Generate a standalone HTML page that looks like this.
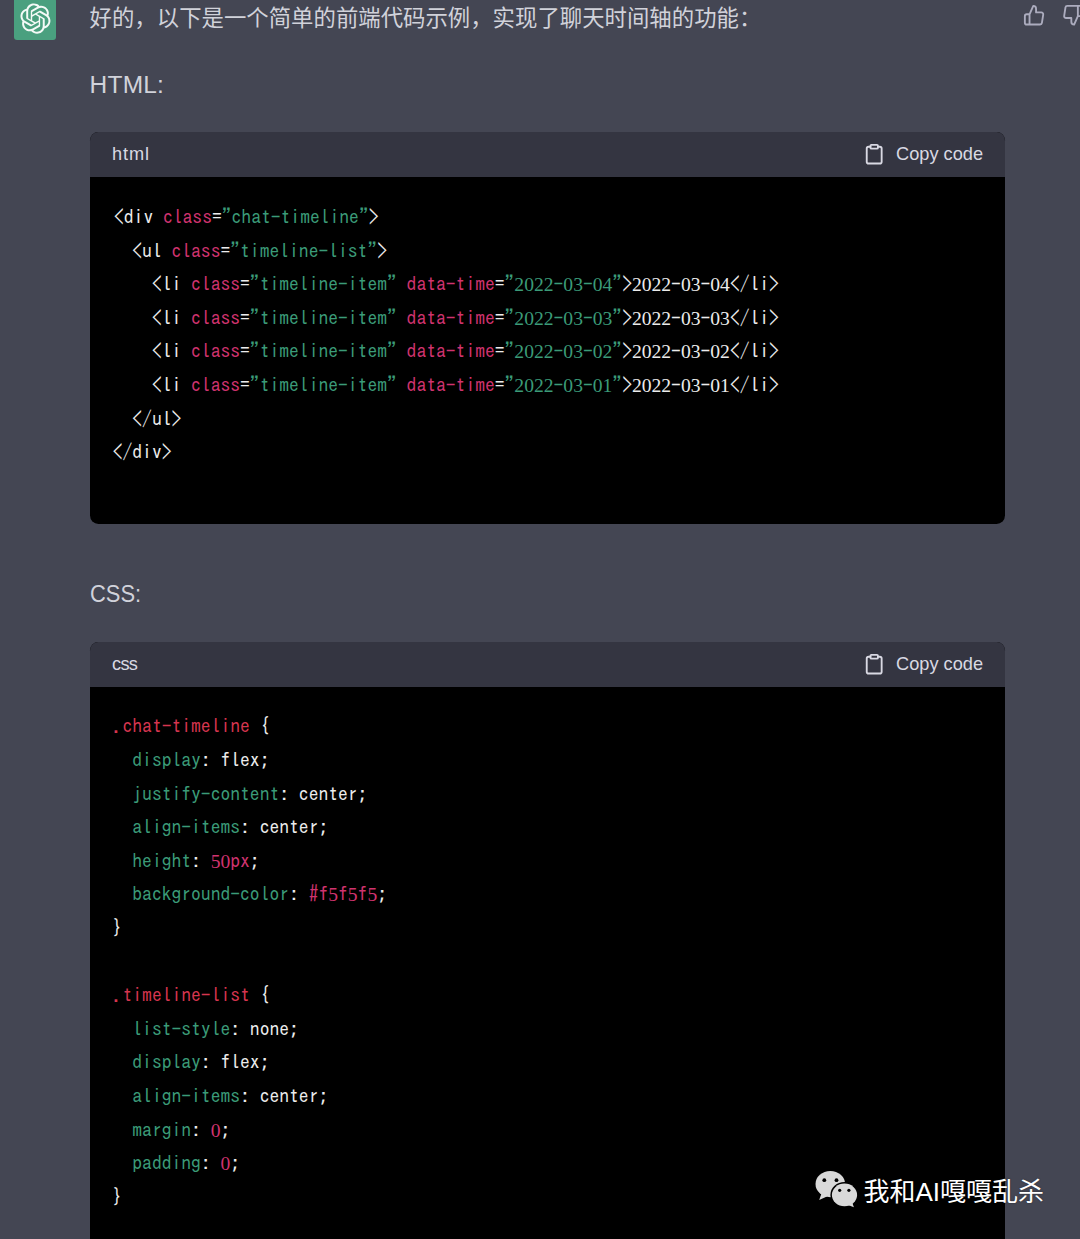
<!DOCTYPE html>
<html lang="zh-CN">
<head>
<meta charset="utf-8">
<title>ChatGPT</title>
<style>
*{box-sizing:border-box}
html,body{margin:0;padding:0;overflow:hidden}
body{width:1080px;height:1239px;overflow:hidden;background:#444653;position:relative;
 font-family:"Liberation Sans","Noto Sans CJK SC",sans-serif;color:#d1d2da}
.avatar{position:absolute;left:14px;top:-2px;width:42px;height:42px;background:#4aa07f;border-radius:3px;color:#f4faf7}
.avatar svg{position:absolute;left:5.75px;top:5.1px;width:31.1px;height:31.1px}
.content{position:absolute;left:89.6px;top:-2.1px;width:915.8px}
p{margin:0 0 28px 0;font-size:22.4px;line-height:39.2px;height:39.2px;white-space:nowrap;padding-top:1.5px}
.en{font-size:24.5px;line-height:1;position:relative;top:-.8px}
.cb{background:#000;border-radius:8.4px;overflow:hidden}
.hd{height:44.8px;background:#343541;display:flex;align-items:center;justify-content:space-between;padding:0 22.4px;
 font-size:18.2px;color:#d9d9e3}
.lb{letter-spacing:.9px}
.copy{display:flex;align-items:center;gap:11px}
.copy svg{width:22.4px;height:22.4px}
pre{margin:0;padding:22.9px 22.4px 21.9px 23.1px;font-family:"IPAGothic","Liberation Mono",monospace;font-size:19.6px;line-height:33.6px;color:#ececec}
pre i{font-style:normal;font-family:"Liberation Serif",serif;line-height:0}
.a{color:#d0336f}.s{color:#3b9b78}.c{color:#d6354f}
.thumb{position:absolute;top:3.5px;width:22.4px;height:22.4px;color:#acacbe}
.wm{position:absolute;left:863.4px;top:1171.8px;font-size:26px;line-height:40px;color:#fff;white-space:nowrap;text-shadow:0 0 2px rgba(0,0,0,.4)}
</style>
</head>
<body>
<div class="avatar"><svg viewBox="0 0 41 41" fill="none"><path d="M37.5324 16.8707C37.9808 15.5241 38.1363 14.0974 37.9886 12.6859C37.8409 11.2744 37.3934 9.91076 36.676 8.68622C35.6126 6.83404 33.9882 5.3676 32.0373 4.4985C30.0864 3.62941 27.9098 3.40259 25.8215 3.85078C24.8796 2.7893 23.7219 1.94125 22.4257 1.36341C21.1295 0.785575 19.7249 0.491269 18.3058 0.500197C16.1708 0.495044 14.0893 1.16803 12.3614 2.42214C10.6335 3.67624 9.34853 5.44666 8.6917 7.47815C7.30085 7.76286 5.98686 8.3414 4.8377 9.17505C3.68854 10.0087 2.73073 11.0782 2.02839 12.312C0.956464 14.1591 0.498905 16.2988 0.721698 18.4228C0.944492 20.5467 1.83612 22.5449 3.268 24.1293C2.81966 25.4759 2.66413 26.9026 2.81182 28.3141C2.95951 29.7256 3.40701 31.0892 4.12437 32.3138C5.18791 34.1659 6.8123 35.6322 8.76321 36.5013C10.7141 37.3704 12.8907 37.5973 14.9789 37.1492C15.9208 38.2107 17.0786 39.0587 18.3747 39.6366C19.6709 40.2144 21.0755 40.5087 22.4946 40.4998C24.6307 40.5054 26.7133 39.8321 28.4418 38.5772C30.1704 37.3223 31.4556 35.5506 32.1119 33.5179C33.5027 33.2332 34.8167 32.6547 35.9659 31.821C37.115 30.9874 38.0728 29.9178 38.7752 28.684C39.8458 26.8371 40.3023 24.6979 40.0789 22.5748C39.8556 20.4517 38.9639 18.4544 37.5324 16.8707ZM22.4978 37.8849C20.7443 37.8874 19.0459 37.2733 17.6994 36.1501C17.7601 36.117 17.8666 36.0586 17.936 36.0161L25.9004 31.4156C26.1003 31.3019 26.2663 31.137 26.3813 30.9378C26.4964 30.7386 26.5563 30.5124 26.5549 30.2825V19.0542L29.9213 20.998C29.9389 21.0068 29.9541 21.0198 29.9656 21.0359C29.977 21.052 29.9842 21.0707 29.9867 21.0902V30.3889C29.9842 32.375 29.1946 34.2791 27.7909 35.6841C26.3872 37.0892 24.4838 37.8806 22.4978 37.8849ZM6.39227 31.0064C5.51397 29.4888 5.19742 27.7107 5.49804 25.9832C5.55718 26.0187 5.66048 26.0818 5.73461 26.1244L13.699 30.7248C13.8975 30.8408 14.1233 30.902 14.3532 30.902C14.583 30.902 14.8088 30.8408 15.0073 30.7248L24.731 25.1103V28.9979C24.7321 29.0177 24.7283 29.0376 24.7199 29.0556C24.7115 29.0736 24.6988 29.0893 24.6829 29.1012L16.6317 33.7497C14.9096 34.7416 12.8643 35.0097 10.9447 34.4954C9.02506 33.9811 7.38785 32.7263 6.39227 31.0064ZM4.29707 13.6194C5.17156 12.0998 6.55279 10.9364 8.19885 10.3327C8.19885 10.4013 8.19491 10.5228 8.19491 10.6071V19.808C8.19351 20.0378 8.25334 20.2638 8.36823 20.4629C8.48312 20.6619 8.64893 20.8267 8.84863 20.9404L18.5723 26.5542L15.206 28.4979C15.1894 28.5089 15.1703 28.5155 15.1505 28.5173C15.1307 28.5191 15.1107 28.516 15.0924 28.5082L7.04046 23.8557C5.32135 22.8601 4.06716 21.2235 3.55289 19.3046C3.03862 17.3858 3.30624 15.3413 4.29707 13.6194ZM31.955 20.0556L22.2312 14.4411L25.5976 12.4981C25.6142 12.4872 25.6333 12.4805 25.6531 12.4787C25.6729 12.4769 25.6928 12.4801 25.7111 12.4879L33.7631 17.1364C34.9967 17.849 36.0017 18.8982 36.6606 20.1613C37.3194 21.4244 37.6047 22.849 37.4832 24.2684C37.3617 25.6878 36.8382 27.0432 35.9743 28.1759C35.1103 29.3086 33.9415 30.1717 32.6047 30.6641C32.6047 30.5947 32.6047 30.4733 32.6047 30.3889V21.188C32.6066 20.9586 32.5474 20.7328 32.4332 20.5338C32.319 20.3348 32.154 20.1698 31.955 20.0556ZM35.3055 15.0128C35.2464 14.9765 35.1431 14.9142 35.069 14.8717L27.1045 10.2712C26.906 10.1554 26.6803 10.0943 26.4504 10.0943C26.2206 10.0943 25.9948 10.1554 25.7963 10.2712L16.0726 15.8858V11.9982C16.0715 11.9783 16.0753 11.9585 16.0837 11.9405C16.0921 11.9225 16.1048 11.9068 16.1207 11.8949L24.1719 7.25025C25.4053 6.53903 26.8158 6.19376 28.2383 6.25482C29.6608 6.31589 31.0364 6.78077 32.2044 7.59508C33.3723 8.40939 34.2842 9.53945 34.8334 10.8531C35.3826 12.1667 35.5464 13.6095 35.3055 15.0128ZM14.2424 21.9419L10.8752 19.9981C10.8576 19.9893 10.8423 19.9763 10.8309 19.9602C10.8195 19.9441 10.8122 19.9254 10.8098 19.9058V10.6071C10.8107 9.18295 11.2173 7.78848 11.9819 6.58696C12.7466 5.38544 13.8377 4.42659 15.1275 3.82264C16.4173 3.21869 17.8524 2.99464 19.2649 3.1767C20.6775 3.35876 22.0089 3.93941 23.1034 4.85067C23.0427 4.88379 22.937 4.94215 22.8668 4.98473L14.9024 9.58517C14.7025 9.69878 14.5366 9.86356 14.4215 10.0626C14.3065 10.2616 14.2466 10.4877 14.2479 10.7175L14.2424 21.9419ZM16.071 17.9991L20.4018 15.4978L24.7325 17.9975V22.9985L20.4018 25.4983L16.071 22.9985V17.9991Z" fill="currentColor"/></svg></div>

<div class="content">
<p>好的，以下是一个简单的前端代码示例，实现了聊天时间轴的功能：</p>
<p><span class="en" style="letter-spacing:.2px">HTML:</span></p>
<div class="cb" id="cb1">
<div class="hd"><span class="lb">html</span><span class="copy"><svg viewBox="0 0 24 24" fill="none" stroke="currentColor" stroke-width="2" stroke-linecap="round" stroke-linejoin="round"><path d="M16 4h2a2 2 0 0 1 2 2v14a2 2 0 0 1-2 2H6a2 2 0 0 1-2-2V6a2 2 0 0 1 2-2h2"/><rect x="8" y="2" width="8" height="4" rx="1" ry="1"/></svg>Copy code</span></div>
<pre style="text-indent:1.3px">&lt;div <span class="a">class</span>=<span class="s">"chat-timeline"</span>&gt;
  &lt;ul <span class="a">class</span>=<span class="s">"timeline-list"</span>&gt;
    &lt;li <span class="a">class</span>=<span class="s">"timeline-item"</span> <span class="a">data-time</span>=<span class="s">"<i>2022</i>-<i>03</i>-<i>04</i>"</span>&gt;<i>2022</i>-<i>03</i>-<i>04</i>&lt;/li&gt;
    &lt;li <span class="a">class</span>=<span class="s">"timeline-item"</span> <span class="a">data-time</span>=<span class="s">"<i>2022</i>-<i>03</i>-<i>03</i>"</span>&gt;<i>2022</i>-<i>03</i>-<i>03</i>&lt;/li&gt;
    &lt;li <span class="a">class</span>=<span class="s">"timeline-item"</span> <span class="a">data-time</span>=<span class="s">"<i>2022</i>-<i>03</i>-<i>02</i>"</span>&gt;<i>2022</i>-<i>03</i>-<i>02</i>&lt;/li&gt;
    &lt;li <span class="a">class</span>=<span class="s">"timeline-item"</span> <span class="a">data-time</span>=<span class="s">"<i>2022</i>-<i>03</i>-<i>01</i>"</span>&gt;<i>2022</i>-<i>03</i>-<i>01</i>&lt;/li&gt;
  &lt;/ul&gt;
&lt;/div&gt;
 
</pre>
</div>
<p style="margin-top:50.4px"><span class="en" style="display:inline-block;transform:scaleX(.895);transform-origin:0 50%">CSS:</span></p>
<div class="cb" id="cb2" style="min-height:640px;border-bottom-left-radius:0;border-bottom-right-radius:0">
<div class="hd"><span class="lb" style="letter-spacing:-.7px">css</span><span class="copy"><svg viewBox="0 0 24 24" fill="none" stroke="currentColor" stroke-width="2" stroke-linecap="round" stroke-linejoin="round"><path d="M16 4h2a2 2 0 0 1 2 2v14a2 2 0 0 1-2 2H6a2 2 0 0 1-2-2V6a2 2 0 0 1 2-2h2"/><rect x="8" y="2" width="8" height="4" rx="1" ry="1"/></svg>Copy code</span></div>
<pre><span class="c">.chat-timeline</span> {
  <span class="s">display</span>: flex;
  <span class="s">justify-content</span>: center;
  <span class="s">align-items</span>: center;
  <span class="s">height</span>: <span class="a"><i>50</i>px</span>;
  <span class="s">background-color</span>: <span class="a">#f<i>5</i>f<i>5</i>f<i>5</i></span>;
}

<span class="c">.timeline-list</span> {
  <span class="s">list-style</span>: none;
  <span class="s">display</span>: flex;
  <span class="s">align-items</span>: center;
  <span class="s">margin</span>: <span class="a"><i>0</i></span>;
  <span class="s">padding</span>: <span class="a"><i>0</i></span>;
}

</pre>
</div>
</div>

<svg class="thumb" style="left:1022.5px" viewBox="0 0 24 24" fill="none" stroke="currentColor" stroke-width="2" stroke-linecap="round" stroke-linejoin="round"><path d="M14 9V5a3 3 0 0 0-3-3l-4 9v11h11.28a2 2 0 0 0 2-1.7l1.38-9a2 2 0 0 0-2-2.3zM7 22H4a2 2 0 0 1-2-2v-7a2 2 0 0 1 2-2h3"/></svg>
<svg class="thumb" style="left:1061.8px" viewBox="0 0 24 24" fill="none" stroke="currentColor" stroke-width="2" stroke-linecap="round" stroke-linejoin="round"><path d="M10 15v4a3 3 0 0 0 3 3l4-9V2H5.72a2 2 0 0 0-2 1.7l-1.38 9a2 2 0 0 0 2 2.3zm7-13h2.67A2.31 2.31 0 0 1 22 4v7a2.31 2.31 0 0 1-2.33 2H17"/></svg>

<svg class="wx" style="position:absolute;left:810px;top:1165px;width:50px;height:48px" viewBox="810 1165 50 48">
<ellipse cx="830.3" cy="1184.1" rx="14.8" ry="13.1" fill="#d9d9d9"/>
<path d="M821.5 1193.5 L819.2 1200 L827.5 1196.2 Z" fill="#d9d9d9"/>
<ellipse cx="844.5" cy="1194.9" rx="14.1" ry="12.8" fill="#000"/>
<ellipse cx="844.5" cy="1194.9" rx="12.6" ry="11.3" fill="#d9d9d9"/>
<path d="M848 1205 L853.9 1207.2 L852.2 1202.5 Z" fill="#d9d9d9"/>
<circle cx="824.3" cy="1180.2" r="1.9" fill="#000"/><circle cx="836.5" cy="1180.2" r="1.9" fill="#000"/>
<circle cx="839.7" cy="1190.3" r="1.6" fill="#000"/><circle cx="848.9" cy="1190.3" r="1.6" fill="#000"/>
</svg>
<div class="wm">我和AI嘎嘎乱杀</div>
</body>
</html>
